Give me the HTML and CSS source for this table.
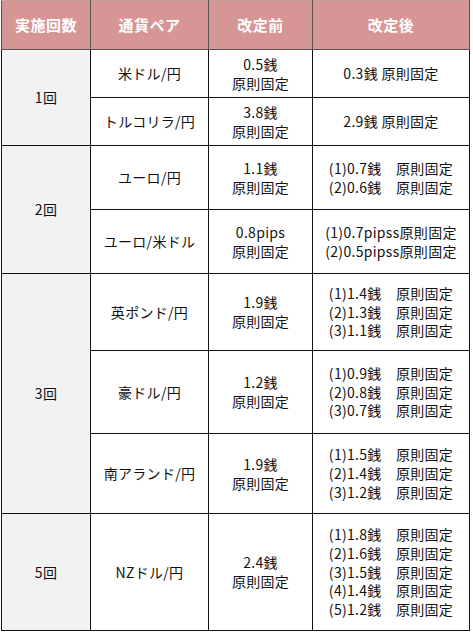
FILE: index.html
```html
<!DOCTYPE html>
<html lang="ja">
<head>
<meta charset="utf-8">
<link rel="stylesheet" href="styles.css">
</head>
<body>
<table class="rate-table">
  <colgroup>
    <col class="c1"><col class="c2"><col class="c3"><col class="c4">
  </colgroup>
  <thead>
    <tr class="head">
      <th>実施回数</th><th>通貨ペア</th><th>改定前</th><th>改定後</th>
    </tr>
  </thead>
  <tbody>
    <tr class="r48">
      <td class="round" rowspan="2">1回</td>
      <td>米ドル/円</td>
      <td>0.5銭<br>原則固定</td>
      <td>0.3銭 原則固定</td>
    </tr>
    <tr class="r48">
      <td>トルコリラ/円</td>
      <td>3.8銭<br>原則固定</td>
      <td>2.9銭 原則固定</td>
    </tr>
    <tr class="r64">
      <td class="round" rowspan="2">2回</td>
      <td>ユーロ/円</td>
      <td>1.1銭<br>原則固定</td>
      <td><span class="list">(1)0.7銭　原則固定<br>(2)0.6銭　原則固定</span></td>
    </tr>
    <tr class="r64">
      <td>ユーロ/米ドル</td>
      <td>0.8pips<br>原則固定</td>
      <td><span class="list">(1)0.7pipss原則固定<br>(2)0.5pipss原則固定</span></td>
    </tr>
    <tr class="r77">
      <td class="round" rowspan="3">3回</td>
      <td>英ポンド/円</td>
      <td>1.9銭<br>原則固定</td>
      <td><span class="list">(1)1.4銭　原則固定<br>(2)1.3銭　原則固定<br>(3)1.1銭　原則固定</span></td>
    </tr>
    <tr class="r83">
      <td>豪ドル/円</td>
      <td>1.2銭<br>原則固定</td>
      <td><span class="list">(1)0.9銭　原則固定<br>(2)0.8銭　原則固定<br>(3)0.7銭　原則固定</span></td>
    </tr>
    <tr class="r80">
      <td>南アランド/円</td>
      <td>1.9銭<br>原則固定</td>
      <td><span class="list">(1)1.5銭　原則固定<br>(2)1.4銭　原則固定<br>(3)1.2銭　原則固定</span></td>
    </tr>
    <tr class="r117">
      <td class="round">5回</td>
      <td>NZドル/円</td>
      <td>2.4銭<br>原則固定</td>
      <td><span class="list">(1)1.8銭　原則固定<br>(2)1.6銭　原則固定<br>(3)1.5銭　原則固定<br>(4)1.4銭　原則固定<br>(5)1.2銭　原則固定</span></td>
    </tr>
  </tbody>
</table>
</body>
</html>
```

FILE: styles.css
```css
html, body {
  margin: 0;
  padding: 0;
  background: #ffffff;
}

body {
  padding: 0 0 0 1px;
  font-family: "Noto Sans CJK JP", "Noto Sans", sans-serif;
  color: #111111;
}

.rate-table {
  border-collapse: collapse;
  table-layout: fixed;
  width: 469px;
  font-size: 14px;
  letter-spacing: 0.3px;
  line-height: 18.7px;
}

.c1 { width: 89px; }
.c2 { width: 118px; }
.c3 { width: 104px; }
.c4 { width: 157px; }

.rate-table th,
.rate-table td {
  border: 1px solid #111111;
  padding: 0;
  text-align: center;
  vertical-align: middle;
}

.head {
  height: 49px;
}

.head th {
  background: #d69696;
  color: #ffffff;
  font-size: 15px;
  letter-spacing: 0.5px;
  font-weight: bold;
  border-color: #555555;
  border-top-color: #c9a0a0;
}

.round {
  background: #f2f2f2;
}

.list {
  display: inline-block;
  text-align: left;
}

.r48 { height: 48px; }
.r64 { height: 64px; }
.r77 { height: 77px; }
.r83 { height: 83px; }
.r80 { height: 80px; }
.r117 { height: 117px; }
```
